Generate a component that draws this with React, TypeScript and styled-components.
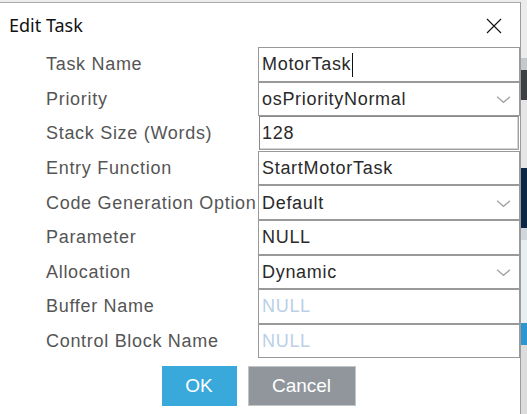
import styled, { createGlobalStyle } from 'styled-components';

const GlobalStyle = createGlobalStyle`
  html, body {
    margin: 0;
    padding: 0;
    background: #ececec;
    overflow: hidden;
  }
  #root {
    width: 527px;
    height: 414px;
  }
`;

type Row = {
  label: string;
  value: string;
  kind?: 'text' | 'select' | 'inset';
  placeholder?: boolean;
  caret?: boolean;
};

const rows: Row[] = [
  { label: 'Task Name', value: 'MotorTask', caret: true },
  { label: 'Priority', value: 'osPriorityNormal', kind: 'select' },
  { label: 'Stack Size (Words)', value: '128', kind: 'inset' },
  { label: 'Entry Function', value: 'StartMotorTask' },
  { label: 'Code Generation Option', value: 'Default', kind: 'select' },
  { label: 'Parameter', value: 'NULL' },
  { label: 'Allocation', value: 'Dynamic', kind: 'select' },
  { label: 'Buffer Name', value: 'NULL', placeholder: true },
  { label: 'Control Block Name', value: 'NULL', placeholder: true },
];

// bands of the application window that peeks out behind the dialog
const bands = [
  { h: 58, c: '#ececec' },
  { h: 12, c: '#c5c9cc' },
  { h: 30, c: '#3d3f42' },
  { h: 68, c: '#e6e6e6' },
  { h: 60, c: '#0d2645' },
  { h: 12, c: '#d0d6dc' },
  { h: 83, c: '#e9eef2' },
  { h: 22, c: '#2f95cf' },
  { h: 69, c: '#dcdcdc' },
];

function Chevron() {
  return (
    <svg width="15" height="8" viewBox="0 0 15 8">
      <path d="M1 1 L7.5 6.5 L14 1" fill="none" stroke="#a4a4a4" strokeWidth="1.3" />
    </svg>
  );
}

function CloseIcon() {
  return (
    <svg width="16" height="16" viewBox="0 0 16 16">
      <path d="M1 1 L15 15 M15 1 L1 15" stroke="#111" strokeWidth="1.1" />
    </svg>
  );
}

export default function App(): JSX.Element {
  return (
    <>
      <GlobalStyle />
      <Screen>
        <Dialog>
          <TitleBar>
            <Title>Edit Task</Title>
            <CloseButton>
              <CloseIcon />
            </CloseButton>
          </TitleBar>

          <Form>
            {rows.map((row) => (
              <FormRow key={row.label}>
                <Label>{row.label}</Label>
                <Field $inset={row.kind === 'inset'}>
                  <Value $placeholder={row.placeholder}>{row.value}</Value>
                  {row.caret && <Caret />}
                  {row.kind === 'select' && (
                    <Arrow>
                      <Chevron />
                    </Arrow>
                  )}
                </Field>
              </FormRow>
            ))}
          </Form>

          <Buttons>
            <Button $variant="primary">OK</Button>
            <Button $variant="secondary">Cancel</Button>
          </Buttons>
        </Dialog>

        <Backdrop>
          {bands.map((b, i) => (
            <Band key={i} style={{ height: b.h, background: b.c }} />
          ))}
        </Backdrop>
      </Screen>
    </>
  );
}

const Screen = styled.div`
  display: flex;
  width: 527px;
  height: 414px;
`;

const Dialog = styled.div`
  width: 521px;
  height: 412px;
  margin-top: 2px;
  background: #fff;
  border-top: 1px solid #a8a8a8;
  border-right: 1px solid #9c9c9c;
  box-sizing: border-box;
  display: flex;
  flex-direction: column;
`;

const TitleBar = styled.div`
  height: 44px;
  display: flex;
  align-items: center;
  justify-content: space-between;
  padding: 0 18px 0 9px;
`;

const Title = styled.div`
  font-family: 'Noto Sans', 'Open Sans', sans-serif;
  font-size: 18px;
  color: #111;
`;

const CloseButton = styled.div`
  display: flex;
  align-items: center;
  padding-top: 2px;
`;

const Form = styled.div`
  display: flex;
  flex-direction: column;
  padding-left: 46px;
`;

const FormRow = styled.div`
  display: grid;
  grid-template-columns: 212px 262px;
  height: 34.6px;
`;

const Label = styled.div`
  display: flex;
  align-items: center;
  padding-top: 1px;
  font-family: 'Liberation Sans', Arial, sans-serif;
  font-size: 18px;
  letter-spacing: 0.7px;
  color: #555;
  white-space: nowrap;
`;

const Field = styled.div<{ $inset?: boolean }>`
  position: relative;
  display: flex;
  align-items: center;
  box-sizing: border-box;
  padding-left: ${(p) => (p.$inset ? '2px' : '3px')};
  padding-top: 1px;
  border: 1px solid #999;
  ${(p) =>
    p.$inset &&
    `
    margin: 0 1px 1px 1px;
    border-color: #8a8a8a #a0a0a0 #a0a0a0 #8a8a8a;
    box-shadow: inset -1px -1px 0 #d4d4d4;
  `}
`;

const Value = styled.span<{ $placeholder?: boolean }>`
  font-family: 'Liberation Sans', Arial, sans-serif;
  font-size: 18px;
  letter-spacing: 0.7px;
  color: ${(p) => (p.$placeholder ? '#b9d0e8' : '#2a2a2a')};
`;

const Caret = styled.span`
  display: inline-block;
  width: 1px;
  height: 24px;
  margin-left: 1px;
  background: #111;
`;

const Arrow = styled.span`
  position: absolute;
  right: 8px;
  top: 50%;
  transform: translateY(-40%);
  display: flex;
`;

const Buttons = styled.div`
  display: flex;
  justify-content: center;
  gap: 11px;
  margin-top: 8px;
  padding-right: 3px;
`;

const Button = styled.div<{ $variant: 'primary' | 'secondary' }>`
  height: 40px;
  width: ${(p) => (p.$variant === 'primary' ? '75px' : '108px')};
  display: flex;
  align-items: center;
  justify-content: center;
  font-family: 'Liberation Sans', Arial, sans-serif;
  font-size: 19px;
  color: #fff;
  background: ${(p) => (p.$variant === 'primary' ? '#39a9dc' : '#90969b')};
  border: 1px solid ${(p) => (p.$variant === 'primary' ? '#39a9dc' : '#c2c5c8')};
  box-sizing: border-box;
`;

const Backdrop = styled.div`
  flex: 1;
  display: flex;
  flex-direction: column;
`;

const Band = styled.div`
  width: 100%;
`;
